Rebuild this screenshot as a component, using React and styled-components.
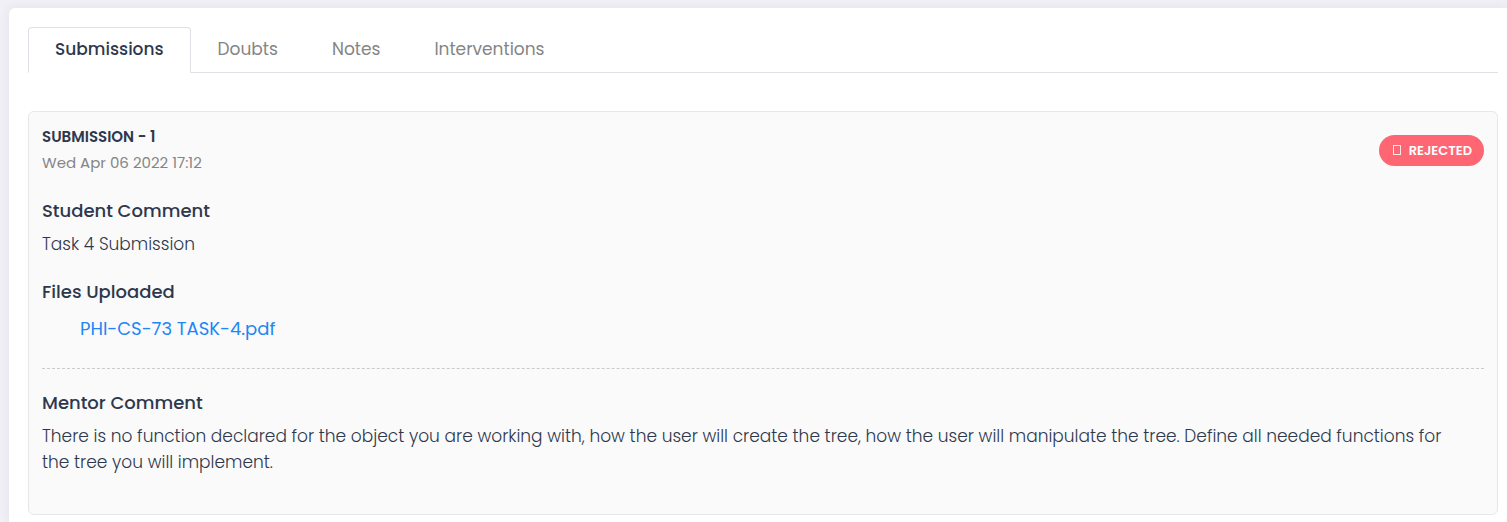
import React from "react";
import styled, { createGlobalStyle } from "styled-components";

const GlobalStyle = createGlobalStyle`
  * { box-sizing: border-box; }
  body {
    margin: 0;
    background: #f0f0f6;
    color: #2e384d;
    font-family: Poppins, Inter, "Open Sans", sans-serif;
    font-size: 17px;
    font-weight: 300;
    line-height: 26px;
  }
`;

const Page = styled.main`
  padding: 8px 0 0 9px;
  overflow: hidden;
`;

const Panel = styled.section`
  padding: 19px 9px 7px 19px;
  background: #fff;
  border-top-left-radius: 6px;
  box-shadow: 0 0 12px rgba(40, 40, 70, 0.07);
`;

const TabBar = styled.div`
  display: flex;
  border-bottom: 1px solid #dee2e6;
`;

const Tab = styled.button`
  margin: 0 0 -1px;
  padding: 8px 26px 10px;
  border: 1px solid;
  border-color: ${(p) => (p.$active ? "#dee2e6 #dee2e6 #fff" : "transparent")};
  border-radius: 4px 4px 0 0;
  background: ${(p) => (p.$active ? "#fff" : "transparent")};
  color: ${(p) => (p.$active ? "#2e384d" : "#858585")};
  font: inherit;
  font-weight: ${(p) => (p.$active ? 500 : 400)};
  cursor: pointer;
`;

const Card = styled.article`
  margin-top: 38px;
  padding: 12px 13px 39px;
  background: #fafafa;
  border: 1px solid #e6e7e9;
  border-radius: 6px;
`;

const CardHeader = styled.header`
  display: flex;
  align-items: center;
  justify-content: space-between;
`;

const CardTitle = styled.h2`
  margin: 0;
  font-size: 15px;
  font-weight: 600;
  line-height: 26px;
  text-transform: uppercase;
`;

const DateText = styled.time`
  display: block;
  color: #858585;
  font-size: 15px;
  font-weight: 400;
`;

const Badge = styled.span`
  display: flex;
  align-items: center;
  gap: 8px;
  padding: 0 12px 0 14px;
  border-radius: 16px;
  background: #ff6673;
  color: #fff;
  font-size: 13px;
  font-weight: 600;
  line-height: 31px;
  text-transform: uppercase;
`;

const Heading = styled.h3`
  margin: 0 0 7px;
  font-size: 18px;
  font-weight: 500;
  line-height: 26px;
`;

const Block = styled.section`
  margin-top: 22px;
`;

const Text = styled.p`
  margin: 0;
  padding-right: 20px;
`;

const FileList = styled.ul`
  margin: 0;
  padding: 4px 0 0 38px;
  list-style: none;
`;

const FileLink = styled.a`
  color: #2186f5;
  font-size: 18px;
  font-weight: 400;
  text-decoration: none;
`;

const Divider = styled.hr`
  margin: 26px 0 21px;
  border: 0;
  border-top: 1px dashed #cbcbcb;
`;

const tabs = ["Submissions", "Doubts", "Notes", "Interventions"];

function MissingGlyph() {
  return (
    <svg width="8" height="10" viewBox="0 0 8 10" aria-hidden="true">
      <rect x="0.5" y="0.5" width="7" height="9" fill="none" stroke="#fff" strokeOpacity="0.85" />
    </svg>
  );
}

export default function App() {
  return (
    <>
      <GlobalStyle />
      <Page>
        <Panel>
          <TabBar role="tablist">
            {tabs.map((name, i) => (
              <Tab key={name} type="button" role="tab" aria-selected={i === 0} $active={i === 0}>
                {name}
              </Tab>
            ))}
          </TabBar>
          <Card>
            <CardHeader>
              <div>
                <CardTitle>Submission - 1</CardTitle>
                <DateText dateTime="2022-04-06T17:12">Wed Apr 06 2022 17:12</DateText>
              </div>
              <Badge>
                <MissingGlyph />
                Rejected
              </Badge>
            </CardHeader>
            <Block>
              <Heading>Student Comment</Heading>
              <Text>Task 4 Submission</Text>
            </Block>
            <Block>
              <Heading>Files Uploaded</Heading>
              <FileList>
                <li>
                  <FileLink href="#file">PHI-CS-73 TASK-4.pdf</FileLink>
                </li>
              </FileList>
            </Block>
            <Divider />
            <Heading>Mentor Comment</Heading>
            <Text>
              There is no function declared for the object you are working with, how the user will create the tree, how
              the user will manipulate the tree. Define all needed functions for the tree you will implement.
            </Text>
          </Card>
        </Panel>
      </Page>
    </>
  );
}
